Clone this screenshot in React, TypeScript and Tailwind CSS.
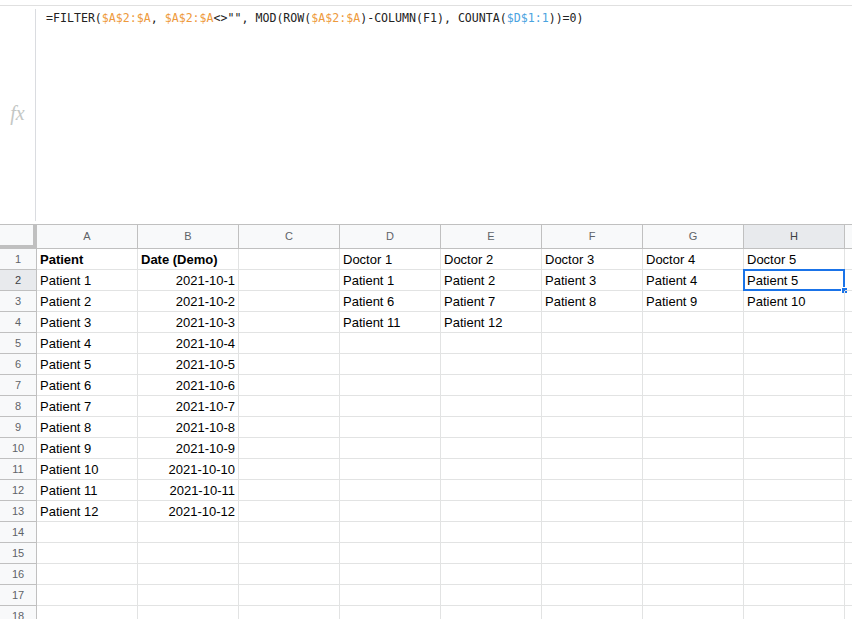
import React from "react";

const cols = ["A", "B", "C", "D", "E", "F", "G", "H", ""];

type Cell = { t: string; b?: boolean; r?: boolean };

const data: Record<number, Record<number, Cell>> = {};
const set = (r: number, c: number, cell: Cell) => {
  data[r] = data[r] || {};
  data[r][c] = cell;
};
set(1, 0, { t: "Patient", b: true });
set(1, 1, { t: "Date (Demo)", b: true });
for (let i = 1; i <= 12; i++) {
  set(i + 1, 0, { t: `Patient ${i}` });
  set(i + 1, 1, { t: `2021-10-${i}`, r: true });
}
for (let d = 1; d <= 5; d++) set(1, 2 + d, { t: `Doctor ${d}` });
for (let p = 1; p <= 12; p++) {
  const row = 2 + Math.floor((p - 1) / 5);
  const col = 3 + ((p - 1) % 5);
  set(row, col, { t: `Patient ${p}` });
}

const O = ({ children }: { children: React.ReactNode }) => (
  <span className="text-[#ee9a3c]">{children}</span>
);
const B = ({ children }: { children: React.ReactNode }) => (
  <span className="text-[#4aa3df]">{children}</span>
);

export default function App() {
  const rows = Array.from({ length: 18 }, (_, i) => i + 1);
  return (
    <div className="w-[852px] h-[619px] overflow-hidden bg-white font-['Liberation_Sans',Arial,sans-serif] text-black">
      <div className="h-[5px]" />
      <div className="flex h-[219px] border-t border-[#e0e0e0]">
        <div className="w-[35px] flex items-center justify-center pb-[4px]">
          <span className="font-['Liberation_Serif',serif] italic text-[20px] text-[#c4c7c5] leading-none">
            fx
          </span>
        </div>
        <div className="w-px bg-[#dadce0] my-[3px]" />
        <div className="pl-[10px] pt-[4px] font-['DejaVu_Sans_Mono',monospace] text-[11.6px] leading-[16px] text-[#222] whitespace-pre">
          =FILTER(<O>$A$2:$A</O>, <O>$A$2:$A</O>{'<>"", MOD(ROW('}
          <O>$A$2:$A</O>)-COLUMN(F1), COUNTA(<B>$D$1:1</B>))=0)
        </div>
      </div>
      <div className="flex h-[25px] border-t border-[#c0c0c0] bg-[#f8f9fa]">
        <div className="w-[37px] shrink-0 h-full border-r-4 border-b-4 border-[#c0c0c0]" />
        {cols.map((c, i) => (
          <div
            key={i}
            className={`w-[101px] shrink-0 h-full border-r border-b border-[#c0c0c0] flex items-center justify-center text-[11px] ${
              c === "H" ? "bg-[#e8eaed] text-[#3c4043]" : "text-[#5f6368]"
            }`}
          >
            {c}
          </div>
        ))}
      </div>
      {rows.map((r) => (
        <div key={r} className="flex h-[21px]">
          <div
            className={`w-[37px] shrink-0 h-full border-r border-b border-[#c0c0c0] flex items-center justify-center pt-px text-[11px] ${
              r === 2 ? "bg-[#e8eaed] text-[#3c4043]" : "bg-[#f8f9fa] text-[#5f6368]"
            }`}
          >
            {r}
          </div>
          {cols.map((_, ci) => {
            const cell = data[r]?.[ci];
            const sel = r === 2 && ci === 7;
            return (
              <div
                key={ci}
                className={`relative w-[101px] shrink-0 h-full border-r border-b border-[#e2e3e3] flex items-center px-[3px] pt-px text-[13px] whitespace-nowrap ${
                  cell?.r ? "justify-end" : "justify-start"
                } ${cell?.b ? "font-bold" : ""}`}
              >
                {cell?.t}
                {sel && (
                  <>
                    <div className="absolute -left-px -top-px -right-px -bottom-px border-2 border-[#1a73e8]" />
                    <div className="absolute -right-[4px] -bottom-[4px] w-[7px] h-[7px] bg-[#1a73e8] border border-white" />
                  </>
                )}
              </div>
            );
          })}
        </div>
      ))}
    </div>
  );
}
